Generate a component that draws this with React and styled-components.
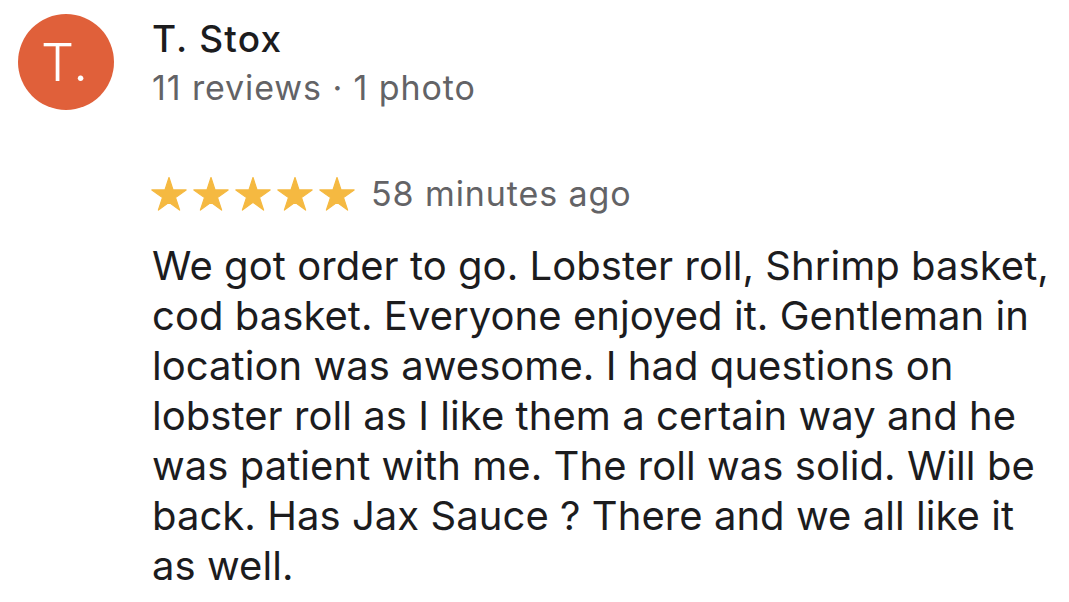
import styled, { createGlobalStyle } from 'styled-components';

const GlobalStyle = createGlobalStyle`
  html, body {
    margin: 0;
    padding: 0;
    background: #fff;
  }
  body {
    font-family: Inter, "Noto Sans", "Liberation Sans", sans-serif;
    -webkit-font-smoothing: antialiased;
  }
`;

const review = {
  initial: 'T.',
  author: 'T. Stox',
  meta: '11 reviews · 1 photo',
  rating: 5,
  when: '58 minutes ago',
  // wrapped the way the app wraps it
  lines: [
    'We got order to go. Lobster roll, Shrimp basket,',
    'cod basket. Everyone enjoyed it. Gentleman in',
    'location was awesome. I had questions on',
    'lobster roll as I like them a certain way and he',
    'was patient with me. The roll was solid. Will be',
    'back. Has Jax Sauce ? There and we all like it',
    'as well.',
  ],
};

// regular five point star, centred in a 36 x 34 box
const starPoints = (() => {
  const R = 18;
  const r = R * 0.382;
  const cx = 18;
  const cy = 18.5;
  const pts = [];
  for (let i = 0; i < 10; i++) {
    const rad = i % 2 === 0 ? R : r;
    const a = (-90 + i * 36) * Math.PI / 180;
    pts.push(`${(cx + rad * Math.cos(a)).toFixed(2)},${(cy + rad * Math.sin(a)).toFixed(2)}`);
  }
  return pts.join(' ');
})();

const Star = () => (
  <SStar viewBox="0 0 36 34" aria-hidden="true">
    <polygon points={starPoints} fill="#f5b941" stroke="#f5b941" strokeWidth="1.2" strokeLinejoin="round" />
  </SStar>
);

const App = () => {
  return (
    <>
      <GlobalStyle />
      <SReview>
        <SAvatar>{review.initial}</SAvatar>
        <SAuthor>
          <SName>{review.author}</SName>
          <SMeta>{review.meta}</SMeta>
        </SAuthor>
        <SRatingRow>
          <SStars>
            {Array.from({ length: review.rating }).map((_, i) => <Star key={i} />)}
          </SStars>
          <SWhen>{review.when}</SWhen>
        </SRatingRow>
        <SBody>
          {review.lines.map((line, i) => <SLine key={i}>{line}</SLine>)}
        </SBody>
      </SReview>
    </>
  )
}

const SReview = styled.div`
  display: grid;
  grid-template-columns: 96px 1fr;
  column-gap: 38px;
  padding: 14px 0 0 18px;
  color: #1c1c1e;
`;

const SAvatar = styled.div`
  width: 96px;
  height: 96px;
  border-radius: 50%;
  background-color: #e0603a;
  color: #fff;
  display: flex;
  align-items: center;
  justify-content: center;
  font-size: 52px;
  font-weight: 300;
  letter-spacing: 1px;
  padding-right: 2px;
  box-sizing: border-box;
`;

const SAuthor = styled.div`
  display: flex;
  flex-direction: column;
  gap: 7px;
  padding-top: 3px;
`;

const SName = styled.div`
  font-size: 37px;
  line-height: 44px;
  font-weight: 500;
  letter-spacing: 1.2px;
  color: #1c1c1e;
`;

const SMeta = styled.div`
  font-size: 34px;
  line-height: 40px;
  letter-spacing: 0.9px;
  color: #636366;
`;

const SRatingRow = styled.div`
  grid-column: 2;
  display: flex;
  align-items: center;
  gap: 16px;
  margin-top: 64px;
`;

const SStars = styled.div`
  display: flex;
  margin-left: -1px;
  gap: 6px;
`;

const SStar = styled.svg`
  width: 36px;
  height: 34px;
  display: block;
`;

const SWhen = styled.div`
  font-size: 34px;
  line-height: 40px;
  letter-spacing: 0.9px;
  color: #636366;
`;

const SBody = styled.p`
  grid-column: 2;
  margin: 27px 0 0 0;
  font-size: 40px;
  line-height: 50px;
  letter-spacing: 0.05px;
  color: #1c1c1e;
`;

const SLine = styled.span`
  display: block;
  white-space: nowrap;
`;

export default App
